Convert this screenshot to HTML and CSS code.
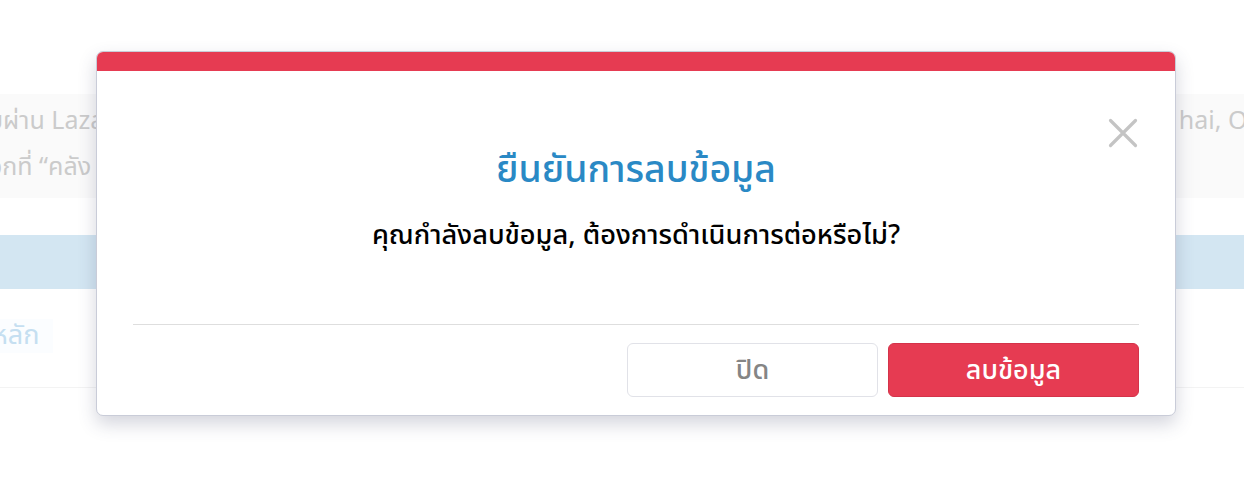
FILE: index.html
```html
<!DOCTYPE html>
<html lang="th">
<head>
<meta charset="utf-8">
<title>ยืนยันการลบข้อมูล</title>
<link rel="stylesheet" href="styles.css">
</head>
<body>
<div class="page">
  <div class="info-box">
    <div class="info-line"><span>บผ่าน Lazada</span><span>hai, Ocean</span></div>
    <div class="info-line"><span>อกที่ “คลัง</span><span></span></div>
  </div>
  <div class="band"></div>
  <div class="row"><span class="tab">หลัก</span></div>
</div>
<div class="modal">
  <div class="modal-top"></div>
  <div class="modal-body">
    <button class="close" aria-label="close">
      <svg width="30" height="30" viewBox="0 0 30 30"><path d="M2.5 2.5 L27.5 27.5 M27.5 2.5 L2.5 27.5" stroke="#c4c4c4" stroke-width="3.2" stroke-linecap="round"/></svg>
    </button>
    <h2 class="title">ยืนยันการลบข้อมูล</h2>
    <p class="message">คุณกำลังลบข้อมูล, ต้องการดำเนินการต่อหรือไม่?</p>
  </div>
  <div class="modal-footer">
    <button class="btn btn-cancel">ปิด</button>
    <button class="btn btn-danger">ลบข้อมูล</button>
  </div>
</div>
</body>
</html>
```

FILE: styles.css
```css
* { box-sizing: border-box; }
html, body { margin: 0; padding: 0; }
body {
  width: 1244px;
  height: 494px;
  overflow: hidden;
  background: #ffffff;
  font-family: "Noto Sans Thai", "Noto Sans", "Open Sans", sans-serif;
  position: relative;
}
.page {
  padding-top: 94px;
}
.info-box {
  height: 104px;
  background: #fafafa;
  padding: 6px 0 0 0;
  display: flex;
  flex-direction: column;
  gap: 4px;
  overflow: hidden;
}
.info-line {
  display: flex;
  justify-content: space-between;
  font-size: 25px;
  color: #cbcbcb;
  line-height: 42px;
  margin-left: -12px;
  margin-right: -59px;
  white-space: nowrap;
}
.info-line span { flex: none; }
.band {
  margin-top: 37px;
  height: 54px;
  background: #d3e6f2;
}
.row {
  height: 99px;
  border-bottom: 1px solid #f3f3f3;
  display: flex;
  align-items: center;
  overflow: hidden;
}
.tab {
  font-size: 27px;
  line-height: 34px;
  color: #c5dff1;
  background: #fbfdff;
  padding: 0 14px 0 0;
  margin-left: -8px;
  margin-top: -4px;
}
.modal {
  position: absolute;
  left: 96px;
  top: 51px;
  width: 1080px;
  height: 365px;
  background: #ffffff;
  border: 1px solid #c9ccd8;
  border-radius: 7px;
  overflow: hidden;
  box-shadow: 0 8px 18px rgba(60, 66, 100, 0.22);
  display: flex;
  flex-direction: column;
}
.modal-top {
  height: 19px;
  background: #e63b52;
  flex: none;
}
.modal-body {
  position: relative;
  height: 254px;
  display: flex;
  flex-direction: column;
  align-items: center;
  border-bottom: 1px solid #dedede;
  margin: 0 36px;
}
.close {
  position: absolute;
  right: 1px;
  top: 47px;
  width: 30px;
  height: 30px;
  padding: 0;
  border: 0;
  background: none;
}
.close svg { display: block; }
.title {
  margin: 75px 0 0 0;
  font-size: 37.3px;
  font-weight: 500;
  color: #2a89c5;
  line-height: 50px;
}
.message {
  margin: 22px 0 0 0;
  font-size: 27.2px;
  font-weight: 500;
  color: #000000;
  line-height: 36px;
}
.modal-footer {
  display: flex;
  justify-content: flex-end;
  gap: 10px;
  padding: 18px 36px 0 36px;
}
.btn {
  width: 251px;
  height: 54px;
  border-radius: 6px;
  font-family: inherit;
  font-size: 27px;
  font-weight: 500;
  cursor: pointer;
  padding: 0;
}
.btn-cancel {
  background: #ffffff;
  border: 1px solid #e1e2e8;
  color: #858585;
}
.btn-danger {
  background: #e63b52;
  border: 1px solid #d4334a;
  color: #ffffff;
}
```
